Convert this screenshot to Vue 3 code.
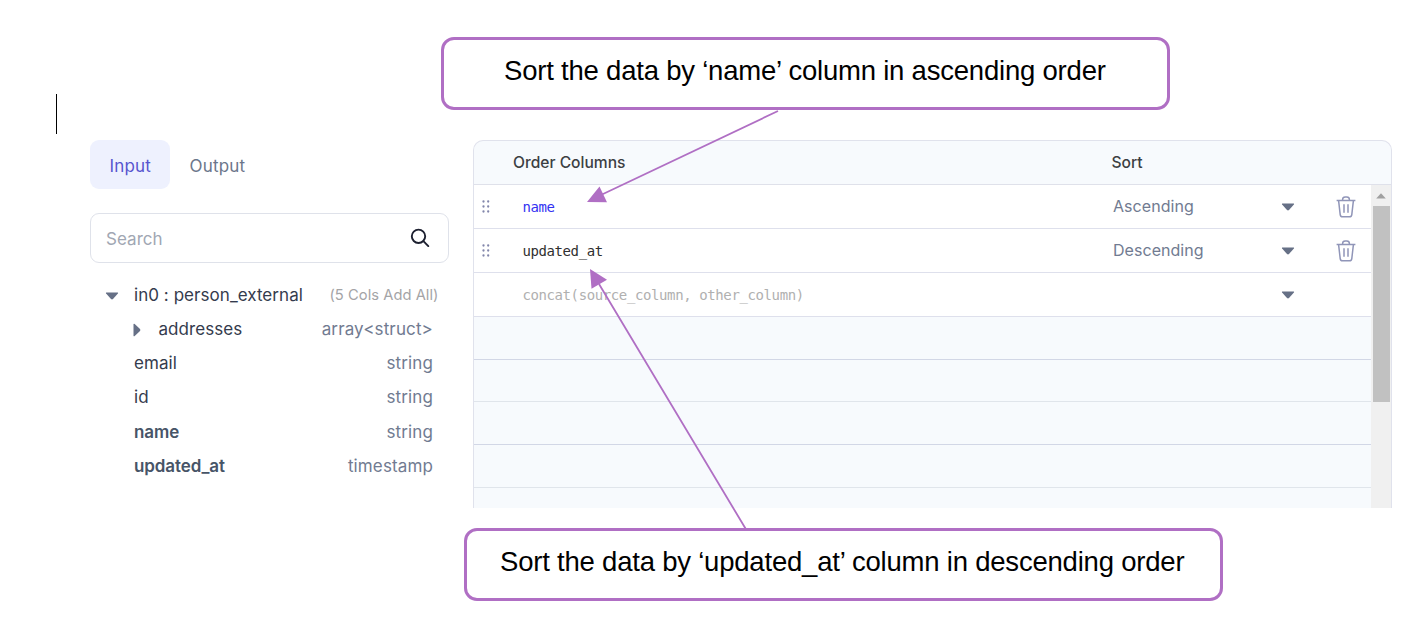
<script setup>
const columns = [
  { name: 'addresses', type: 'array<struct>', nested: true },
  { name: 'email', type: 'string' },
  { name: 'id', type: 'string' },
  { name: 'name', type: 'string', used: true },
  { name: 'updated_at', type: 'timestamp', used: true },
]
const orders = [
  { expr: 'name', sort: 'Ascending', keyword: true },
  { expr: 'updated_at', sort: 'Descending' },
]
</script>

<template>
  <div class="page">
    <span class="cursor"></span>
    <aside class="sidebar">
      <nav class="tabs">
        <button class="tab active">Input</button>
        <button class="tab">Output</button>
      </nav>
      <div class="search">
        <span class="placeholder">Search</span>
        <svg width="20" height="20" viewBox="0 0 20 20">
          <circle cx="8.5" cy="8.3" r="6.7" />
          <path d="M13.4 13.2L18.3 18.1" />
        </svg>
      </div>
      <div class="tree">
        <div class="node root">
          <svg class="caret" width="14" height="8" viewBox="0 0 14 8"><path d="M1.2 0.6H12.8Q13.4 1 12.9 1.6L8 7Q7 7.8 6 7L1.1 1.6Q0.6 1 1.2 0.6Z" /></svg>
          <span class="root-name">in0 : person_external</span>
          <span class="add-all">(5 Cols Add All)</span>
        </div>
        <div v-for="c in columns" :key="c.name" class="node">
          <svg v-if="c.nested" class="caret side" width="8" height="14" viewBox="0 0 8 14"><path d="M0.5 1.1Q1 0.4 1.7 1L7 6Q7.8 7 7 8L1.7 13Q1 13.6 0.5 12.9Z" /></svg>
          <span :class="{ used: c.used, nested: c.nested }">{{ c.name }}</span>
          <span class="type">{{ c.type }}</span>
        </div>
      </div>
    </aside>

    <section class="table">
      <header class="head">
        <span class="h-order">Order Columns</span>
        <span class="h-sort">Sort</span>
      </header>
      <div class="body">
        <div class="rows">
          <div v-for="o in orders" :key="o.expr" class="row">
            <svg class="grip" width="8" height="14" viewBox="0 0 8 14">
              <g v-for="y in [1.5, 6.5, 11.5]" :key="y">
                <circle cx="1.5" :cy="y" r="1.15" /><circle cx="6.2" :cy="y" r="1.15" />
              </g>
            </svg>
            <code class="expr" :class="{ keyword: o.keyword }">{{ o.expr }}</code>
            <span class="sort">{{ o.sort }}</span>
            <svg class="caret" width="14" height="8" viewBox="0 0 14 8"><path d="M1.2 0.6H12.8Q13.4 1 12.9 1.6L8 7Q7 7.8 6 7L1.1 1.6Q0.6 1 1.2 0.6Z" /></svg>
            <svg class="trash" width="20" height="22" viewBox="0 0 20 22">
              <path d="M0.6 4.5H19.4M6.6 4.3V3.6Q6.6 1 9.2 1H10.8Q13.4 1 13.4 3.6V4.3M2.6 4.7L4.2 18.6Q4.5 20.8 6.6 20.8H13.4Q15.5 20.8 15.8 18.6L17.4 4.7M8 8.3V16.8M12 8.3V16.8" />
            </svg>
          </div>
          <div class="row">
            <span class="grip"></span>
            <code class="expr hint">concat(source_column, other_column)</code>
            <span class="sort"></span>
            <svg class="caret" width="14" height="8" viewBox="0 0 14 8"><path d="M1.2 0.6H12.8Q13.4 1 12.9 1.6L8 7Q7 7.8 6 7L1.1 1.6Q0.6 1 1.2 0.6Z" /></svg>
          </div>
          <div v-for="n in 5" :key="n" class="row blank" :class="{ dark: n % 2 }"></div>
        </div>
        <div class="scrollbar">
          <svg width="20" height="21" viewBox="0 0 20 21"><path d="M5.2 13.5L10 8.3L14.8 13.5Z" /></svg>
          <div class="thumb"></div>
        </div>
      </div>
    </section>

    <svg class="arrows" width="1423" height="618" viewBox="0 0 1423 618">
      <path d="M778 111L602 194.5M745.500 528.500L599 284" />
      <polygon points="587,202 599.500,186.500 607,202.300" />
      <polygon points="590,269 607,279.800 591.500,288.800" />
    </svg>
    <div class="callout first"><span>Sort the data by ‘name’ column in ascending order</span></div>
    <div class="callout second"><span>Sort the data by ‘updated_at’ column in descending order</span></div>
  </div>
</template>

<style>
body { background: #fff; overflow: hidden; }
</style>

<style scoped>
* { box-sizing: border-box; }
.page {
  position: relative;
  width: 1423px;
  height: 618px;
  padding: 140px 31px 0 90px;
  display: flex;
  gap: 24px;
  overflow: hidden;
  font-family: Inter, "Liberation Sans", sans-serif;
  font-size: 17px;
  font-weight: 380;
  letter-spacing: 0.05px;
  color: #343b4d;
  white-space: nowrap;
}
svg { display: block; flex: none; }
.cursor { position: absolute; left: 56px; top: 94px; width: 1px; height: 40px; background: #000; }
.sidebar { width: 359px; flex: none; }
.tabs { display: flex; height: 49px; }
.tab {
  width: 80px; border: 0; padding: 1px 0 0 19.5px; background: none; border-radius: 9px;
  font: inherit; line-height: 50px; text-align: left; color: #6c768b; letter-spacing: 0.2px;
}
.tab.active { background: #eef1fe; color: #5755cf; }
.search {
  margin-top: 24px; height: 50px; border: 1.5px solid #dfe2ea; border-radius: 9px;
  display: flex; align-items: center; justify-content: space-between;
  padding: 0 18px 0 15px; color: #a1a7b3;
}
.placeholder { padding-top: 2px; }
.search svg { fill: none; stroke: #1d2030; stroke-width: 1.9; stroke-linecap: round; }
.tree { margin-top: 15px; }
.node { height: 34.15px; display: flex; align-items: center; padding: 0 16px 0 44px; }
.root { padding: 0 10.5px 0 15px; }
.caret { fill: #667086; }
.root .caret { margin-top: 2px; }
.root-name { margin-left: 15px; }
.add-all { margin-left: auto; font-size: 14.7px; color: #a4a4a6; }
.side { margin-left: -1px; margin-top: 1px; }
.nested { margin-left: 17.5px; }
.type { margin-left: auto; color: #717b91; letter-spacing: 0.13px; }
.used { font-weight: 600; color: #475467; letter-spacing: -0.1px; }
.table {
  width: 919px; height: 368px; flex: none; border: 1px solid #e0e2ec; border-bottom: 0;
  border-radius: 10px 10px 0 0; background: #f7fafd; overflow: hidden;
}
.head {
  height: 44px; display: flex; align-items: center; border-bottom: 1px solid #dfe1ea;
  font-size: 15.6px; font-weight: 500; letter-spacing: 0; color: #3c3f43; padding: 0 0 1px 39px;
}
.h-order { width: 598.5px; }
.body { display: flex; height: 323px; }
.rows { width: 897px; overflow: hidden; }
.row { height: 44px; display: flex; align-items: center; background: #fff; border-bottom: 1px solid #dee0ec; padding-left: 8px; }
.blank { height: 42.7px; background: #f7fafd; border-color: #e0e5eb; }
.blank.dark { border-color: #d2d7e6; }
.grip { width: 8px; fill: #8286ab; }
.expr { margin-left: 32.4px; width: 590.6px; font: 14px "DejaVu Sans Mono", "Liberation Mono", monospace; letter-spacing: -0.39px; color: #303030; padding-top: 1px; }
.keyword { color: #3333f2; }
.hint { color: #b0b0b0; }
.sort { width: 168px; font-size: 16px; color: #717b91; padding-bottom: 2px; }
.trash { margin-left: 41px; fill: none; stroke: #9095b8; stroke-width: 1.5; }
.scrollbar { width: 20px; background: #f0f0f0; }
.scrollbar svg { fill: #a0a0a0; }
.thumb { width: 17px; height: 196px; margin-left: 2px; background: #c1c1c1; }
.arrows { position: absolute; left: 0; top: 0; }
.arrows path { stroke: #b06fc4; stroke-width: 1.8; fill: none; }
.arrows polygon { fill: #b06fc4; }
.callout {
  position: absolute; height: 73px; border: 3px solid #b06fc4; border-radius: 13px; background: #fff;
  font: 27.5px/61px "Liberation Sans", Arial, sans-serif; letter-spacing: -0.21px; color: #000;
}
.first { left: 441px; top: 37px; width: 729px; padding-left: 60px; }
.second { left: 464px; top: 528px; width: 759px; padding-left: 33px; }
</style>
